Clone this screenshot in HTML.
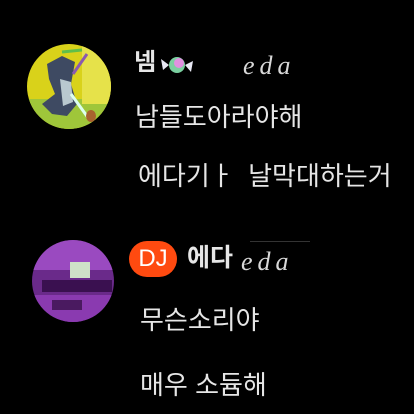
<!DOCTYPE html>
<html><head><meta charset="utf-8"><style>
body{margin:0;width:414px;height:414px;background:#000;overflow:hidden;position:relative;font-family:"Liberation Sans","Noto Sans CJK KR",sans-serif;color:#e6e6e6}
.a{position:absolute}
.t{position:absolute;font-size:26px;line-height:1;white-space:nowrap}
.eda{position:absolute;font-family:"Liberation Serif",serif;font-style:italic;font-size:26px;color:#d8d8d8;letter-spacing:5px}
</style></head><body>
<svg class="a" style="left:27px;top:44px" width="84" height="85" viewBox="0 0 84 85">
<defs><clipPath id="c1"><ellipse cx="42" cy="42.5" rx="42" ry="42.5"/></clipPath></defs>
<g clip-path="url(#c1)">
<rect width="84" height="85" fill="#d9d21a"/>
<rect y="55" width="84" height="30" fill="#9fc63a"/>
<rect x="55" y="0" width="29" height="60" fill="#e6e24a"/>
<path d="M20 20 L35 12 L48 18 L44 40 L50 60 L40 72 L25 70 L15 60 L28 50 L22 35Z" fill="#3e4a62"/>
<path d="M33 35 L44 38 L46 58 L36 62Z" fill="#b9c8cf"/>
<path d="M35 8 L55 6" stroke="#5fbf4a" stroke-width="3"/>
<path d="M44 50 L62 75" stroke="#dfe" stroke-width="3"/>
<path d="M60 10 L46 30" stroke="#8a5ab0" stroke-width="3"/>
<ellipse cx="64" cy="72" rx="5" ry="6" fill="#a8622e"/>
</g></svg>
<div class="t" style="left:134px;top:51px;font-size:24px;font-weight:bold">넴</div>
<svg class="a" style="left:160px;top:52px" width="34" height="26" viewBox="0 0 34 26"><circle cx="17" cy="13" r="8" fill="#7ad0a0"/><circle cx="19" cy="11" r="5" fill="#e090e0"/><path d="M9 13 L1 7 L3 18Z M25 13 L33 9 L31 20Z" fill="#e8e8f4"/></svg>
<div class="eda" style="left:243px;top:51px">eda</div>
<div class="t" style="left:135px;top:104px">남들도아라야해</div>
<div class="t" style="left:138px;top:163px">에다기ㅏ&nbsp; 날막대하는거</div>

<svg class="a" style="left:32px;top:240px" width="82" height="82" viewBox="0 0 82 82">
<defs><clipPath id="c2"><circle cx="41" cy="41" r="41"/></clipPath></defs>
<g clip-path="url(#c2)">
<rect width="82" height="82" fill="#6a2a8a"/>
<rect x="0" y="0" width="82" height="30" fill="#9a4ac0"/>
<rect x="38" y="22" width="20" height="16" fill="#cfe0c8"/>
<rect x="10" y="40" width="70" height="12" fill="#3a1050"/>
<rect x="0" y="55" width="82" height="27" fill="#8a3ab0"/>
<rect x="20" y="60" width="30" height="10" fill="#4a1a60"/>
</g></svg>
<div class="a" style="left:129px;top:241px;width:48px;height:36px;border-radius:18px;background:#ff4a10;color:#fff;font-size:24px;line-height:36px;text-align:center">DJ</div>
<div class="t" style="left:187px;top:246px;font-size:25px;font-weight:bold">에다</div>
<div class="a" style="left:250px;top:241px;width:60px;height:1px;background:#333"></div>
<div class="eda" style="left:241px;top:247px">eda</div>
<div class="t" style="left:140px;top:307px">무슨소리야</div>
<div class="t" style="left:140px;top:372px">매우 소듐해</div>
</body></html>
